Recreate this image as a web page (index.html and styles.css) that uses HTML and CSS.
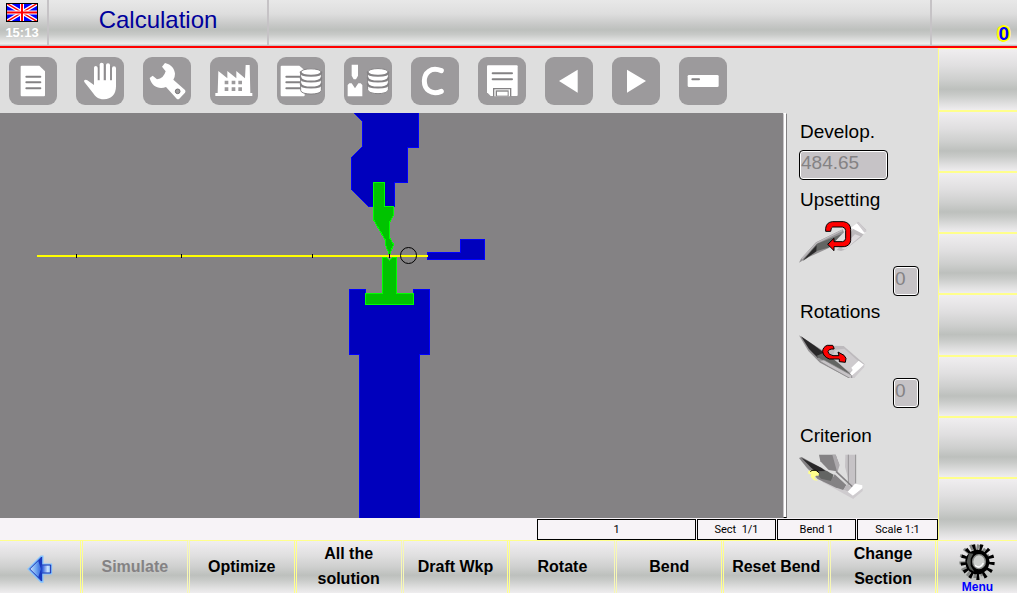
FILE: index.html
```html
<!DOCTYPE html>
<html lang="en">
<head>
    <meta charset="UTF-8">
    <meta name="viewport" content="width=device-width, initial-scale=1.0">
    <title>Calculation</title>
    <link rel="stylesheet" href="styles.css">
</head>
<body>

<header class="topbar">
    <div class="clock">
        <svg class="flag" viewBox="0 0 32 19" aria-hidden="true">
            <rect width="32" height="19" fill="#0000ff"/>
            <path d="M0 0L32 19M32 0L0 19" stroke="#fff" stroke-width="4"/>
            <path d="M0 0L32 19M32 0L0 19" stroke="#f00" stroke-width="1.500"/>
            <path d="M16 0V19M0 9.500H32" stroke="#fff" stroke-width="4"/>
            <path d="M16 0V19M0 9.500H32" stroke="#f00" stroke-width="2"/>
            <rect x=".5" y=".5" width="31" height="18" fill="none" stroke="#000"/>
        </svg>
        <span>15:13</span>
    </div>
    <h1 class="title">Calculation</h1>
    <div class="message"></div>
    <div class="counter">0</div>
</header>

<main class="main">
    <div class="content">
        <!-- Toolbar -->
        <nav class="toolbar">
            <button type="button" aria-label="Program">
                <svg viewBox="0 0 144 144">
                    <path class="shape" d="M35 29q0-3 3-3H91L108 43V115q0 3-3 3H38q-3 0-3-3Z"/>
                    <path class="line" d="M52 59H94M52 76H94M52 94H94"/>
                </svg>
            </button>
            <button type="button" aria-label="Manual">
                <svg viewBox="0 0 144 144">
                    <path class="shape" d="M54 87V32q0-5 5-5t6 5V70H71V22q0-5 6-5t6 5V70H90V24q0-5 6-5t6 5V70H108V34q0-6 6-6t6 6V88C120 112 106 127 84 127C66 127 58 118 51 108L25 75C22 69 29 66 34 70L54 84Z"/>
                    <path class="thin" d="M68 28V70M86 22V70M105 28V70" stroke-dasharray="4 2"/>
                </svg>
            </button>
            <button type="button" aria-label="Setup">
                <svg viewBox="0 0 144 144">
                    <path class="shape" d="M66 18C85 22 95 36 96 50Q96 60 91 68L126 99Q129 103 126 107L109 125Q105 128 101 125L69 90C48 99 26 88 20 63L29 56L42 67Q62 65 68 43L57 29Z"/>
                    <circle class="hole" cx="104" cy="103" r="7"/>
                </svg>
            </button>
            <button type="button" aria-label="Production">
                <svg viewBox="0 0 144 144">
                    <path class="shape" d="M16 117V108H23L25 42L52 64V42L79 64V42L105 64L107 24H119L121 108H127V117Z"/>
                    <path class="windows" d="M44 71h11v11h-11zM65 71h11v11h-11zM85 71h11v11h-11zM44 91h11v11h-11zM65 91h11v11h-11zM85 91h11v11h-11z"/>
                </svg>
            </button>
            <button type="button" aria-label="Program list">
                <svg viewBox="0 0 144 144">
                    <path class="shape" d="M11 29q0-3 3-3H67L83 40V115q0 3-3 3H14q-3 0-3-3Z"/>
                    <path class="line" d="M28 59H71M28 76H71M28 94H71"/>
                    <path class="disks" d="M71 46V100C71 115 133 115 133 100V46C133 32 71 32 71 46Z"/>
                    <path class="line" d="M71 46C71 60 133 60 133 46M71 63C71 77 133 77 133 63M71 81C71 95 133 95 133 81"/>
                </svg>
            </button>
            <button type="button" aria-label="Tool list">
                <svg viewBox="0 0 144 144">
                    <path class="shape" d="M23 23H42V56L36 67H29L23 56ZM11 118V84L16 79H23L33 94L43 79H50L55 84V118Z"/>
                    <path class="disks" d="M71 46V98C71 114 133 114 133 98V46C133 31 71 31 71 46Z"/>
                    <path class="line" d="M71 46C71 60 133 60 133 46M71 63C71 77 133 77 133 63M71 81C71 95 133 95 133 81"/>
                </svg>
            </button>
            <button type="button" aria-label="Calculate">
                <svg viewBox="0 0 144 144">
                    <path class="arc" d="M91 41C60 28 40 48 40 72C40 96 60 116 91 103"/>
                </svg>
            </button>
            <button type="button" aria-label="Save">
                <svg viewBox="0 0 144 144">
                    <path class="shape" d="M27 28q0-3 3-3H116q3 0 3 3V114q0 3-3 3H38L27 106Z"/>
                    <path class="line" d="M44 49H102M44 67H102"/>
                    <path d="M45 118V93H100V118Z" fill="#848284"/>
                    <path class="shape" d="M49 118V97H96V118Z"/>
                    <path d="M53 118V100H92V118Z" fill="#848284"/>
                    <path class="shape" d="M57 116V104H89V116Z"/>
                </svg>
            </button>
            <button type="button" aria-label="Previous">
                <svg viewBox="0 0 144 144"><path class="shape" d="M42 72L98 38V107Z"/></svg>
            </button>
            <button type="button" aria-label="Next">
                <svg viewBox="0 0 144 144"><path class="shape" d="M102 72L45 38V107Z"/></svg>
            </button>
            <button type="button" aria-label="Section">
                <svg viewBox="0 0 144 144">
                    <rect class="shape" x="26" y="54" width="93" height="36" rx="4"/>
                    <path class="line" d="M40 67H60"/>
                </svg>
            </button>
        </nav>

        <div class="workspace">
            <!-- Bending view: punch, die, sheet and back gauge -->
            <svg class="drawing" viewBox="0 0 783 405" preserveAspectRatio="xMidYMid slice" shape-rendering="crispEdges" role="img" aria-label="Bending view">
                <g fill="#0000bd" stroke="#0000ff">
                    <path d="M353.500 -.5L362.500 8.500V33.500L351.500 44.500V76.500L368.500 93.500H394.500V69.500H407.500V34.500H418.500V-.5Z"/>
                    <path d="M349.500 176.500H365.500V190.500H413.500V176.500H429.500V241.500H419.500V405.500H359.500V241.500H349.500Z"/>
                    <path d="M427.500 139.500H460.500V126.500H484.500V146.500H427.500Z"/>
                </g>
                <g fill="#00c300" stroke="#00ff00">
                    <path d="M373.500 69.500H384.500V93.500H393.500V102.500L389.500 109.500V124.500L393.500 131.500L389.500 142.500L385.500 131.500V127.500L373.500 106.500Z"/>
                    <path d="M382.500 144.500H386.500L389.500 147.500L392.500 144.500H396.500V180.500H413.500V191.500H365.500V180.500H382.500Z"/>
                </g>
                <path d="M37 143H428" stroke="#ffff00" stroke-width="2"/>
                <path d="M76.500 141V145M181.500 141V145M312.500 141V145M389.500 141V145" stroke="#000"/>
                <circle cx="408.500" cy="142.500" r="8" fill="none" stroke="#000" shape-rendering="auto"/>
            </svg>
            <div class="splitter"></div>

            <aside class="panel">
                <div class="field">
                    <label for="develop">Develop.</label>
                    <input class="wide" type="text" id="develop" value="484.65" disabled>
                </div>
                <div class="field">
                    <label for="upsetting">Upsetting</label>
                    <svg class="picture" viewBox="12 9 216 144" aria-hidden="true">
                        <path d="M125 105L140 90L190 20L214 45L200 65L150 104L138 108Z" fill="#bdbabd"/>
                        <path d="M140 100L180 58L196 64L150 104Z" fill="#dedbde"/>
                        <path d="M168 38L186 25L212 54L204 57Z" fill="#fff"/>
                        <path d="M184 20L191 22L215 48L208 53Z" fill="#cecbce"/>
                        <path d="M12 143L18 131L63 82L143 43L147 52L100 100L40 127Z" fill="#949294"/>
                        <path d="M24 138L64 87L140 57L104 97L66 108Z" fill="#636563"/>
                        <path d="M24 136L65 91L64 109Z" fill="#292829"/>
                        <path d="M20 132L65 84L142 46" fill="none" stroke="#bdbabd" stroke-width="4"/>
                        <path d="M92 49V40Q94 22 112 20H146Q166 23 167 43V77Q165 92 148 95H117V107L98 88L117 70V80H143Q151 79 152 70V46Q151 37 142 36H113Q108 37 107 49Z" fill="#f00" stroke="#000" stroke-width="3"/>
                    </svg>
                    <input type="text" id="upsetting" value="0" disabled>
                </div>
                <div class="field">
                    <label for="rotations">Rotations</label>
                    <svg class="picture" viewBox="12 0 216 144" aria-hidden="true">
                        <path d="M105 47L146 48L209 103L172 150L77 89Z" fill="#bdbabd"/>
                        <path d="M120 59L148 56L194 97L166 125L108 93Z" fill="#cecbce"/>
                        <path d="M12 16L82 61L171 134L169 148L75 98L40 63Z" fill="#949294"/>
                        <path d="M18 19L60 48L92 72L68 83L42 57Z" fill="#292829"/>
                        <path d="M64 78L90 67L137 105L166 133L82 90Z" fill="#636563"/>
                        <path d="M70 91L87 90L170 136V148L100 109Z" fill="#c6c3c6" stroke="#848284" stroke-width="2"/>
                        <path d="M169 113L191 92L208 105L171 137L165 130L173 120Z" fill="#fff"/>
                        <path d="M172 137L208 103V111L174 148Z" fill="#cecbce"/>
                        <path d="M117 54L113 46H97Q83 51 83 65Q85 80 103 87H133V95L151 97L153 85L147 76L129 66L132 77H114Q99 74 99 65Q101 56 117 57Z" fill="#f00" stroke="#000" stroke-width="3"/>
                    </svg>
                    <input type="text" id="rotations" value="0" disabled>
                </div>
                <div class="field">
                    <span class="caption">Criterion</span>
                    <svg class="picture" viewBox="12 16 216 144" aria-hidden="true">
                        <path d="M72 18H122L132 47L125 68L101 64L76 38Z" fill="#848284"/>
                        <path d="M112 18H122L134 49L127 72Z" fill="#adaaad"/>
                        <path d="M151 18H183V105L167 119L150 55Z" fill="#c6c3c6"/>
                        <path d="M160 18V108M182 18V104" stroke="#949294" stroke-width="3"/>
                        <path d="M76 92L175 137V151L84 101Z" fill="#cecbce"/>
                        <path d="M12 28L20 25L100 69L145 124L120 116L68 91L36 58Z" fill="#848284"/>
                        <path d="M20 28L80 58L94 69L69 75L47 56Z" fill="#292829"/>
                        <path d="M60 68L95 67L116 78L108 97L78 90Z" fill="#636563"/>
                        <path d="M106 99L119 77L154 109L145 124Z" fill="#848284"/>
                        <path d="M130 88L157 105L145 123L164 131L172 117Z" fill="#bdbabd"/>
                        <path d="M123 68L173 115" stroke="#848284" stroke-width="5"/>
                        <path d="M158 129L180 105L202 110V119L174 141Z" fill="#fff"/>
                        <path d="M174 141L203 119V127L174 151Z" fill="#cecbce"/>
                        <path d="M40 67L50 64L63 65L72 72L71 81H63L58 88L69 96L57 95L47 84L48 76H40Z" fill="#ffff8c"/>
                        <path d="M46 69L51 65H63L73 73" fill="none" stroke="#000" stroke-width="3"/>
                    </svg>
                </div>
            </aside>
        </div>

        <div class="status">
            <span>1</span>
            <span>Sect&nbsp; 1/1</span>
            <span>Bend 1</span>
            <span>Scale 1:1</span>
        </div>
    </div>

    <!-- Side keys, not assigned on this page -->
    <div class="sidekeys">
        <button type="button" aria-label="Key 1"></button>
        <button type="button" aria-label="Key 2"></button>
        <button type="button" aria-label="Key 3"></button>
        <button type="button" aria-label="Key 4"></button>
        <button type="button" aria-label="Key 5"></button>
        <button type="button" aria-label="Key 6"></button>
        <button type="button" aria-label="Key 7"></button>
        <button type="button" aria-label="Key 8"></button>
    </div>
</main>

<footer class="softkeys">
    <button type="button" aria-label="Back">
        <svg class="back" viewBox="0 0 78 84">
            <defs>
                <linearGradient id="arrow">
                    <stop offset="0" stop-color="#e0f0ff"/>
                    <stop offset=".35" stop-color="#6ba2f0"/>
                    <stop offset=".6" stop-color="#2855d8"/>
                    <stop offset=".85" stop-color="#d0e8ff"/>
                    <stop offset="1" stop-color="#5a96f0"/>
                </linearGradient>
            </defs>
            <path d="M4 42L42 4H47V28H73V56H47V81H42Z" fill="url(#arrow)" stroke="#84c3ff" stroke-width="5"/>
            <path d="M8 42L44 6V30H71V54H44V78Z" fill="none" stroke="#1830b0" stroke-width="3"/>
            <path d="M34 18L44 6V78L34 66L42 42Z" fill="#1838c0"/>
        </svg>
    </button>
    <button type="button" disabled>Simulate</button>
    <button type="button">Optimize</button>
    <button type="button">All the solution</button>
    <button type="button">Draft Wkp</button>
    <button type="button">Rotate</button>
    <button type="button">Bend</button>
    <button type="button">Reset Bend</button>
    <button type="button">Change Section</button>
    <button type="button" class="menu">
        <svg class="gear" viewBox="0 0 108 114" aria-hidden="true">
            <ellipse cx="47" cy="54" rx="37" ry="42" fill="none" stroke="#848684" stroke-width="18" stroke-dasharray="4 6" pathLength="130"/>
            <ellipse cx="56" cy="57" rx="41" ry="44" fill="none" stroke="#000" stroke-width="20" stroke-dasharray="4 6" pathLength="130"/>
            <ellipse cx="55" cy="57" rx="36" ry="37"/>
            <path d="M30 31L43 32L35 47L35 68L46 86L32 79L23 57Z" fill="#525552"/>
            <ellipse cx="60" cy="56" rx="19" ry="21" fill="#ced0ce" stroke="#848684" stroke-width="4"/>
            <path d="M48 67Q62 80 73 60" fill="none" stroke="#fff" stroke-width="4"/>
        </svg>
        <span>Menu</span>
    </button>
</footer>

</body>
</html>
```
FILE: styles.css
```css
/* Page */
* {
    box-sizing: border-box;
}

body {
    font-family: "Liberation Sans", Arial, sans-serif;
    margin: 0;
    min-height: 100vh;
    display: flex;
    flex-direction: column;
    background: #dedede;
    color: #000;
}

button {
    font: inherit;
    margin: 0;
    padding: 0;
    border: none;
    cursor: pointer;
}

/* Top bar */
.topbar {
    display: grid;
    grid-template-columns: 49px 220px 1fr 85px;
    height: 48px;
    border-bottom: 2px solid #ff0000;
    background: linear-gradient(#e8e8e8, #dedede 30%, #c6c7c6 55%, #bdc0bd 65%, #c8cac8 75%, #efefef 96%, #c6c3c6 98%);
}

.topbar > * {
    border-right: 2px solid #c6c3c6;
}

.topbar > :last-child {
    border-right: none;
}

.clock {
    display: flex;
    flex-direction: column;
    align-items: center;
    padding: 3px 3px 0 0;
    font-size: 13px;
    line-height: 22px;
    font-weight: bold;
    color: #fff;
}

.flag {
    width: 32px;
    height: 19px;
    flex-shrink: 0;
}

.title {
    margin: 0;
    font-size: 24px;
    font-weight: normal;
    line-height: 40px;
    text-align: center;
    color: #00009c;
}

.counter {
    padding: 24px 8px 0 0;
    font-size: 19px;
    line-height: 20px;
    font-weight: bold;
    text-align: right;
    color: #0000ff;
    text-shadow: 2px 0 #ff0, -2px 0 #ff0, 0 2px #ff0, 0 -2px #ff0, 2px 1px #ff0, -2px 1px #ff0, 2px -1px #ff0, -2px -1px #ff0;
}

/* Middle part */
.main {
    flex: 1;
    display: grid;
    grid-template-columns: 1fr 79px;
}

.content {
    display: flex;
    flex-direction: column;
    min-width: 0;
}

.toolbar {
    display: flex;
    gap: 19px;
    padding: 9px 9px 8px;
}

.toolbar button {
    width: 48px;
    height: 48px;
    border-radius: 9px;
    background: #9c9a9c;
}

.toolbar svg {
    display: block;
    width: 48px;
    height: 48px;
}

.shape,
.disks {
    fill: #fff;
}

.disks {
    stroke: #848284;
    stroke-width: 3;
}

.line {
    fill: none;
    stroke: #848284;
    stroke-width: 6;
    stroke-linecap: round;
}

.thin {
    fill: none;
    stroke: #848284;
    stroke-width: 3;
}

.hole {
    fill: #9c9a9c;
    stroke: #737173;
    stroke-width: 3;
}

.windows {
    fill: #9c9a9c;
}

.arc {
    fill: none;
    stroke: #fff;
    stroke-width: 15;
    stroke-linecap: round;
}

.workspace {
    flex: 1;
    display: flex;
}

.drawing {
    flex: 1;
    min-width: 0;
    background: #848284;
}

.splitter {
    width: 4px;
    border: 1px solid #848284;
    border-left-color: #c6c3c6;
    border-top-color: #fff;
    border-bottom-color: #000;
    background: #fff;
}

/* Parameter panel */
.panel {
    width: 151px;
    padding: 8px 19px 0 12px;
    display: flex;
    flex-direction: column;
    gap: 5px;
}

.field {
    display: flex;
    flex-direction: column;
    align-items: flex-start;
}

.field label,
.caption {
    padding-left: 1px;
    margin-bottom: 7px;
    font-size: 19px;
    line-height: 22px;
}

.field input {
    align-self: flex-end;
    width: 26px;
    height: 30px;
    padding: 0 0 4px 1px;
    border: 1px solid #000;
    border-radius: 4px;
    background: #c6c3c6;
    box-shadow: inset 0 0 0 1px #fff;
    font: 19px "Liberation Sans", Arial, sans-serif;
    color: #848284;
}

.field .wide {
    align-self: flex-start;
    width: 89px;
}

.field:first-child {
    margin-bottom: 4px;
}

.field:last-child {
    margin-top: 12px;
}

.picture {
    width: 72px;
    height: 48px;
}

/* Status row */
.status {
    display: flex;
    justify-content: flex-end;
    gap: 1px;
    height: 22px;
    padding-top: 1px;
    background: #f7f3f7;
}

.status span {
    width: 79px;
    border: 1px solid #000;
    font-family: Roboto, sans-serif;
    font-size: 11px;
    line-height: 20px;
    text-align: center;
}

.status span:first-child {
    width: 159px;
}

.status span:last-child {
    width: 81px;
}

/* Keys on the right side and at the bottom */
.sidekeys {
    display: grid;
    grid-template-rows: 64px repeat(7, 1fr);
}

.sidekeys button,
.softkeys button {
    background: linear-gradient(#f0eef0, #e0dfe0 28%, #cecfce 50%, #bdc0bd 66%, #c8cac8 75%, #e0e0e0 90%, #efedef);
}

.sidekeys button {
    border-left: 1px solid #ffff8c;
    border-bottom: 2px solid #ffff8c;
}

.sidekeys button:first-child {
    border-top: 1px solid #ffff8c;
}

.sidekeys button:last-child {
    border-bottom: none;
}

.softkeys {
    display: grid;
    grid-template-columns: 83fr repeat(8, 107fr) 79px;
    height: 53px;
    background: #efefef;
}

.softkeys button {
    padding: 0 4px 2px;
    border-top: 1px solid #ffff8c;
    border-right: 3px double #ffff8c;
    font-size: 16px;
    line-height: 25px;
    font-weight: bold;
    color: #000;
}

.softkeys button:nth-child(even) {
    border-right-color: #f7f7b5;
}

.softkeys button:disabled {
    color: #848284;
}

.softkeys .back {
    display: block;
    width: 26px;
    height: 28px;
    margin: 6px auto 0;
}

.softkeys .menu {
    display: flex;
    flex-direction: column;
    align-items: center;
    padding: 2px 0 0;
    border-right: none;
    font-size: 12px;
    line-height: 12px;
    color: #0000ff;
}

.gear {
    width: 36px;
    height: 38px;
    flex-shrink: 0;
}
```
